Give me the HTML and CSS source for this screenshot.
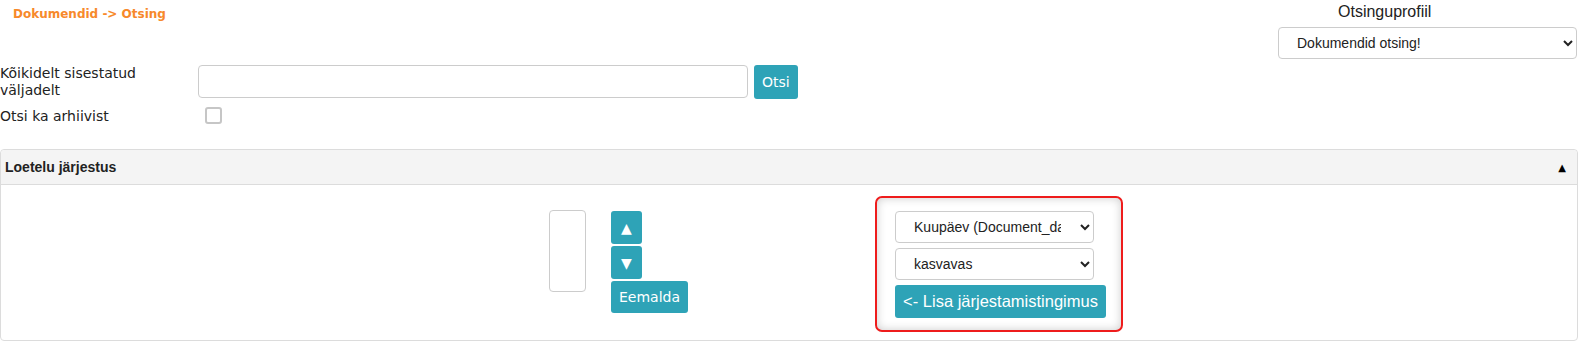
FILE: index.html
```html
<!DOCTYPE html>
<html lang="et">
<head>
    <meta charset="UTF-8">
    <title>Dokumendid - Otsing</title>
    <link rel="stylesheet" href="styles.css">
</head>
<body>
    <div class="top">
        <div class="search">
            <div class="crumb">Dokumendid -&gt; Otsing</div>
            <div class="search-form">
                <label class="field-label" for="q">Kõikidelt sisestatud väljadelt</label>
                <div class="field">
                    <input id="q" type="text" class="text-input">
                    <button class="btn">Otsi</button>
                </div>
                <label class="field-label field-label-low" for="arch">Otsi ka arhiivist</label>
                <div class="field">
                    <input id="arch" type="checkbox" class="check">
                </div>
            </div>
        </div>
        <div class="profile">
            <div class="profile-label">Otsinguprofiil</div>
            <select class="select">
                <option>Dokumendid otsing!</option>
            </select>
        </div>
    </div>

    <div class="panel">
        <div class="panel-head">
            <span>Loetelu järjestus</span>
            <span class="caret">▲</span>
        </div>
        <div class="panel-body">
            <select multiple class="order-list"></select>
            <div class="order-buttons">
                <button class="btn btn-icon">▲</button>
                <button class="btn btn-icon">▼</button>
                <button class="btn btn-small">Eemalda</button>
            </div>
            <div class="order-add">
                <select class="select">
                    <option>Kuupäev (Document_date)</option>
                </select>
                <select class="select">
                    <option>kasvavas</option>
                    <option>kahanevas</option>
                </select>
                <button class="btn btn-wide">&lt;- Lisa järjestamistingimus</button>
            </div>
        </div>
    </div>
</body>
</html>
```

FILE: styles.css
```css
body {
    margin: 0;
    font-family: "DejaVu Sans", Verdana, sans-serif;
    font-size: 14px;
    color: #222;
    background: #fff;
}
.top {
    display: flex;
    justify-content: space-between;
    align-items: flex-start;
    padding-right: 7px;
}
.crumb {
    padding: 7px 0 0 13px;
    font-weight: bold;
    font-size: 12px;
    line-height: 14px;
    color: #f7892b;
}
.search-form {
    display: grid;
    grid-template-columns: 198px auto;
    row-gap: 7px;
    margin-top: 44px;
}
.field-label {
    max-width: 175px;
    line-height: 17px;
}
.field-label-low {
    margin-top: 2px;
}
.field {
    display: flex;
    align-items: flex-start;
    gap: 6px;
}
.text-input {
    width: 550px;
    height: 33px;
    box-sizing: border-box;
    border: 1px solid #ccc;
    border-radius: 4px;
    padding: 0 8px;
    font: inherit;
}
.check {
    appearance: none;
    width: 17px;
    height: 17px;
    margin: 1px 0 0 7px;
    border: 2px solid #c6c6c6;
    border-radius: 3px;
    background: #fff;
}
.btn {
    height: 34px;
    padding: 0 8px;
    background: #2ea3b7;
    color: #fff;
    border: none;
    border-radius: 3px;
    font-family: "DejaVu Sans", Verdana, sans-serif;
    font-size: 14px;
    cursor: pointer;
}
.btn-icon {
    width: 31px;
    height: 33px;
    padding: 0;
    font-size: 14px;
}
.btn-small {
    height: 32px;
}
.btn-wide {
    width: 211px;
    height: 33px;
    padding: 0;
    font-family: "Liberation Sans", Arial, sans-serif;
    font-size: 16.5px;
}
.profile {
    display: flex;
    flex-direction: column;
    width: 299px;
}
.profile-label {
    padding: 3px 0 0 60px;
    font-family: "Liberation Sans", Arial, sans-serif;
    font-size: 16px;
    line-height: 18px;
}
.profile .select {
    margin-top: 6px;
}
.select {
    width: 100%;
    height: 32px;
    padding: 0 4px 0 14px;
    border: 1px solid #ccc;
    border-radius: 4px;
    background: #fff;
    font-family: "Liberation Sans", Arial, sans-serif;
    font-size: 14px;
    color: #222;
}
.panel {
    margin: 24px 6px 0 0;
    border: 1px solid #dcdcdc;
    border-radius: 4px;
}
.panel-head {
    display: flex;
    justify-content: space-between;
    align-items: center;
    height: 34px;
    padding: 0 11px 0 4px;
    background: #f4f4f4;
    border-bottom: 1px solid #dcdcdc;
    border-radius: 4px 4px 0 0;
    font-family: "Liberation Sans", Arial, sans-serif;
    font-weight: bold;
    font-size: 14px;
    color: #222;
}
.caret {
    font-family: "DejaVu Sans", sans-serif;
    font-size: 10px;
    color: #000;
}
.panel-body {
    display: flex;
    align-items: flex-start;
    padding: 11px 0 8px 548px;
}
.order-list {
    width: 37px;
    height: 82px;
    margin-top: 14px;
    box-sizing: border-box;
    border: 1px solid #ccc;
    border-radius: 4px;
}
.order-buttons {
    display: flex;
    flex-direction: column;
    align-items: flex-start;
    gap: 2px;
    margin: 15px 0 0 25px;
}
.order-add {
    display: flex;
    flex-direction: column;
    gap: 5px;
    margin-left: 187px;
    padding: 13px 15px 12px 18px;
    border: 2px solid #ee1c1c;
    border-radius: 7px;
    box-shadow: inset 0 0 10px rgba(0,0,0,0.2);
}
.order-add .select {
    width: 199px;
    padding-right: 16px;
}
```
